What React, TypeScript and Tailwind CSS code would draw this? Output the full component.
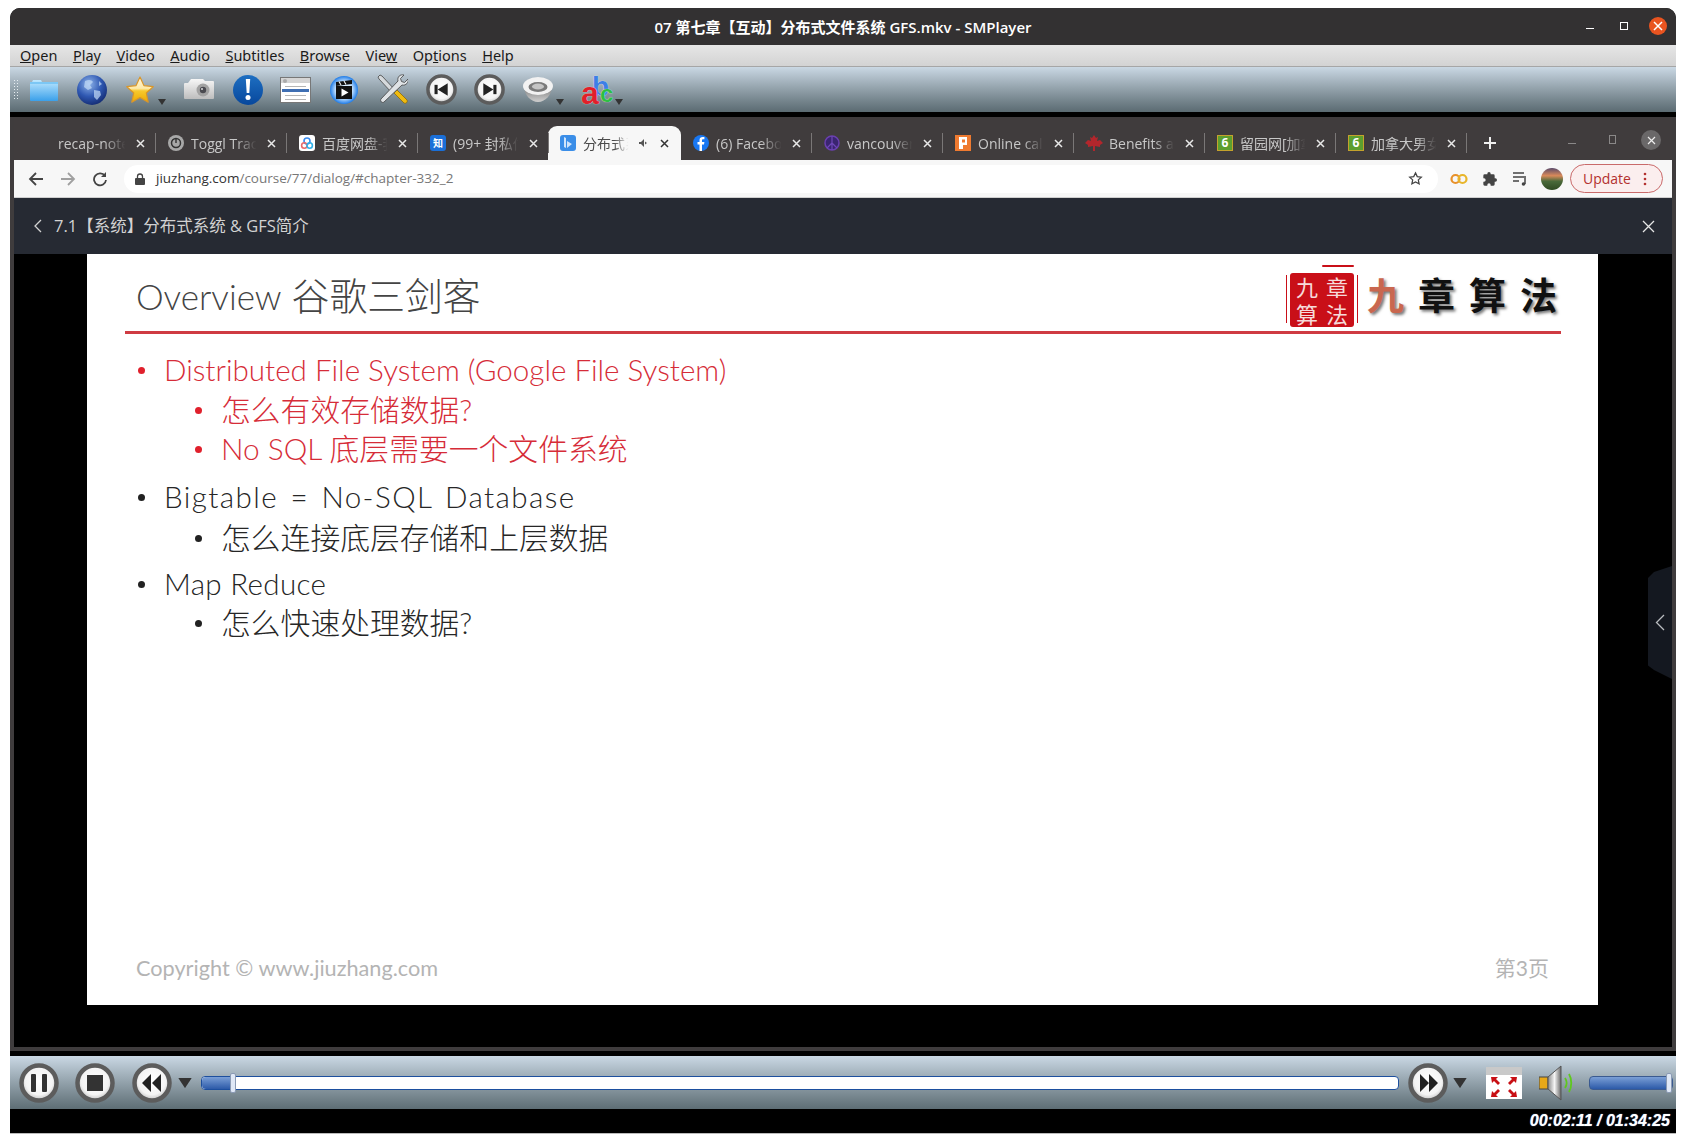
import React from "react";

const ui = { fontFamily: '"Open Sans","Noto Sans CJK SC",sans-serif' };
const menuFont = { fontFamily: '"Noto Sans","Noto Sans CJK SC",sans-serif' };
const slide = { fontFamily: 'Lato,"Noto Sans CJK SC",sans-serif' };

function Caret({ className = "" }: { className?: string }) {
  return (
    <svg width="8" height="6" viewBox="0 0 8 6" className={className}>
      <path d="M0 0h8L4 6z" fill="#333" />
    </svg>
  );
}

function Round({ size, children, className = "" }: { size: number; children: React.ReactNode; className?: string }) {
  return (
    <svg width={size} height={size} viewBox="0 0 40 40" className={className}>
      <defs>
        <radialGradient id="gl" cx="50%" cy="45%" r="55%">
          <stop offset="0%" stopColor="#fff" />
          <stop offset="70%" stopColor="#f4f4f4" />
          <stop offset="100%" stopColor="#bdbdbd" />
        </radialGradient>
      </defs>
      <circle cx="20" cy="20" r="17.5" fill="url(#gl)" stroke="#5c5c5c" strokeWidth="4.5" />
      {children}
    </svg>
  );
}

const Folder = () => (
  <svg width="30" height="24" viewBox="0 0 30 24">
    <defs>
      <linearGradient id="fo" x1="0" y1="0" x2="0" y2="1">
        <stop offset="0" stopColor="#bfe8ff" />
        <stop offset="1" stopColor="#3aa0ea" />
      </linearGradient>
    </defs>
    <path d="M1 4h2l1-2h8l1 2h16v18a1 1 0 0 1-1 1H2a1 1 0 0 1-1-1z" fill="url(#fo)" />
    <path d="M1 4h28v2H1z" fill="#7cc7f5" />
  </svg>
);
const Globe = () => (
  <svg width="30" height="30" viewBox="0 0 30 30">
    <defs>
      <radialGradient id="gb" cx="40%" cy="30%" r="75%">
        <stop offset="0" stopColor="#8fb4ea" />
        <stop offset="0.55" stopColor="#2f58b2" />
        <stop offset="1" stopColor="#12296f" />
      </radialGradient>
    </defs>
    <circle cx="15" cy="15" r="15" fill="url(#gb)" />
    <path d="M8 6c4-2 7-1 8 1l-3 3 2 3-4 2-4-3zM17 15l6 1 1 4-4 5-3-3zM22 6l3 3-3 2z" fill="#c3dbf6" opacity=".7" />
  </svg>
);
const Star = () => (
  <svg width="30" height="30" viewBox="0 0 30 30">
    <defs>
      <linearGradient id="st" x1="0" y1="0" x2="0" y2="1">
        <stop offset="0" stopColor="#fff7e0" />
        <stop offset="0.45" stopColor="#fde9a8" />
        <stop offset="0.55" stopColor="#f7c92e" />
        <stop offset="1" stopColor="#eda900" />
      </linearGradient>
    </defs>
    <path d="M15 2l3.900 8.600 9.300 1.100-6.900 6.300 1.900 9.200L15 22.600l-8.200 4.600 1.900-9.200-6.900-6.300 9.300-1.100z" fill="url(#st)" stroke="#d9962a" strokeWidth="1.200" strokeLinejoin="round" />
  </svg>
);
const Camera = () => (
  <svg width="30" height="21" viewBox="0 0 30 21">
    <defs>
      <linearGradient id="ca" x1="0" y1="0" x2="0" y2="1">
        <stop offset="0" stopColor="#f7f7f7" />
        <stop offset="1" stopColor="#bdbdbd" />
      </linearGradient>
    </defs>
    <path d="M1 4h3l3-4h12l2 2h8a1 1 0 0 1 1 1v16a1 1 0 0 1-1 1H1a1 1 0 0 1-1-1V5a1 1 0 0 1 1-1z" fill="url(#ca)" />
    <circle cx="19" cy="11" r="6.500" fill="#a2a2a2" />
    <circle cx="19" cy="11" r="3.200" fill="#4a4a50" />
    <circle cx="18" cy="10" r="1" fill="#ddd" />
  </svg>
);
const Info = () => (
  <svg width="30" height="30" viewBox="0 0 30 30">
    <defs>
      <linearGradient id="in" x1="0" y1="0" x2="0" y2="1">
        <stop offset="0" stopColor="#1e6fc2" />
        <stop offset="1" stopColor="#07479c" />
      </linearGradient>
    </defs>
    <circle cx="15" cy="15" r="15" fill="url(#in)" />
    <path d="M12.800 4h4.400l-.9 14h-2.600z" fill="#fff" />
    <circle cx="15" cy="22.500" r="2.500" fill="#fff" />
  </svg>
);
const Playlist = () => (
  <svg width="31" height="26" viewBox="0 0 31 26">
    <rect x=".5" y=".5" width="30" height="25" fill="#fff" stroke="#777" />
    <rect x="1" y="1" width="29" height="5" fill="#d5d5d5" />
    <circle cx="5" cy="4" r="2" fill="#aaa" />
    <rect x="5" y="9" width="21" height="1" fill="#b5b5b5" />
    <rect x="2" y="12" width="27" height="3" fill="#3f6fb3" />
    <rect x="5" y="18" width="21" height="1" fill="#b5b5b5" />
    <rect x="5" y="22" width="21" height="1" fill="#b5b5b5" />
  </svg>
);
const Film = () => (
  <svg width="28" height="28" viewBox="0 0 28 28">
    <defs>
      <radialGradient id="fi" cx="50%" cy="50%" r="50%">
        <stop offset="0.55" stopColor="#d7ecff" />
        <stop offset="1" stopColor="#1f7ce8" />
      </radialGradient>
    </defs>
    <circle cx="14" cy="14" r="14" fill="url(#fi)" />
    <rect x="6" y="10" width="16" height="13" fill="#111" />
    <path d="M6 6l16-2v4l-16 2z" fill="#111" />
    <path d="M9 5.500l2 3.500M14 5l2 3.500" stroke="#eee" strokeWidth="1.200" />
    <path d="M11.500 12.500l7 4-7 4z" fill="#fff" />
  </svg>
);
const Tools = () => (
  <svg width="31" height="31" viewBox="0 0 31 31">
    <path d="M1 3l2-2 2 1 13 14-3 3L2 5z" fill="#d5d9dc" stroke="#444" strokeWidth=".8" />
    <path d="M17 19l3-3 10 10c1 2-1 4-3 3z" fill="#f0bb10" stroke="#8f6c06" strokeWidth=".8" />
    <path d="M27 1l-3.500 3.500 1 3 3 1L31 5c1 3-2 7-6 6L7 28c-1.500 1.500-4.500-1-3-3L21 7c-1-4 2-7 6-6z" fill="#dfe3e6" stroke="#444" strokeWidth=".8" />
  </svg>
);
const Prev = () => (
  <Round size={31}>
    <rect x="11" y="14" width="4" height="12" fill="#222" />
    <path d="M28 12v16L15 20z" fill="#222" />
  </Round>
);
const Next = () => (
  <Round size={31}>
    <rect x="25" y="14" width="4" height="12" fill="#222" />
    <path d="M12 12v16l13-8z" fill="#222" />
  </Round>
);
const Speaker = () => (
  <svg width="30" height="26" viewBox="0 0 30 26">
    <defs>
      <linearGradient id="sb" x1="0" y1="0" x2="0" y2="1">
        <stop offset="0" stopColor="#777" />
        <stop offset="1" stopColor="#cfcfcf" />
      </linearGradient>
    </defs>
    <path d="M1 9c0 9 7 16 14 16s14-7 14-16z" fill="url(#sb)" />
    <ellipse cx="15" cy="9" rx="15" ry="9" fill="#f2f2f2" />
    <ellipse cx="15" cy="10" rx="9.500" ry="5" fill="#7a7a7a" />
    <ellipse cx="15" cy="9.500" rx="6" ry="3" fill="#c4c4c4" />
  </svg>
);
const Abc = () => (
  <div className="relative w-[32px] h-[34px] font-bold leading-none" style={{ fontFamily: '"Liberation Sans",sans-serif' }}>
    <span className="absolute left-[12px] top-[0px] text-[28px] text-[#3d7fe6] [text-shadow:0_0_1px_#fff]">b</span>
    <span className="absolute left-[1px] top-[4px] text-[32px] text-[#e0202a] [text-shadow:0_0_1px_#fff]">a</span>
    <span className="absolute left-[20px] top-[9px] text-[24px] text-[#2ebf44] [text-shadow:0_0_1px_#fff]">c</span>
  </div>
);

const Ico = {
  toggl: (
    <svg width="16" height="16" viewBox="0 0 16 16">
      <circle cx="8" cy="8" r="8" fill="#a8a8a8" />
      <circle cx="8" cy="8" r="4.500" fill="none" stroke="#333" strokeWidth="1.500" />
      <rect x="7.300" y="4" width="1.400" height="4" fill="#333" />
    </svg>
  ),
  baidu: (
    <svg width="16" height="16" viewBox="0 0 16 16">
      <rect width="16" height="16" rx="3" fill="#fff" />
      <circle cx="8" cy="6" r="3" fill="none" stroke="#3b8cf0" strokeWidth="1.600" />
      <circle cx="5.300" cy="10.500" r="2.700" fill="none" stroke="#e86a6a" strokeWidth="1.600" />
      <circle cx="10.700" cy="10.500" r="2.700" fill="none" stroke="#2fb0e8" strokeWidth="1.600" />
    </svg>
  ),
  zhihu: (
    <div className="w-[16px] h-[16px] rounded-[3px] bg-[#1a6fd8] text-white text-[10px] leading-[16px] text-center font-bold">知</div>
  ),
  active: (
    <svg width="16" height="16" viewBox="0 0 16 16">
      <rect width="16" height="16" rx="3" fill="#3b8ee8" />
      <path d="M4 2l2 1v10l-2-1zM7 6l5 3-5 4z" fill="#cfe4fb" />
    </svg>
  ),
  fb: (
    <svg width="16" height="16" viewBox="0 0 16 16">
      <circle cx="8" cy="8" r="8" fill="#1877f2" />
      <path d="M9 16V9.500h2l.4-2.500H9V5.500c0-.8.300-1.200 1.200-1.200h1.200V2.100C11 2 10.300 2 9.700 2 7.800 2 6.500 3.100 6.500 5.200V7H4.500v2.500h2V16z" fill="#fff" />
    </svg>
  ),
  peace: (
    <svg width="16" height="16" viewBox="0 0 16 16">
      <circle cx="8" cy="8" r="7" fill="#3a2570" stroke="#6a3fb0" strokeWidth="1.500" />
      <path d="M8 1v14M8 8l-5 5M8 8l5 5" stroke="#6f48b8" strokeWidth="1.200" />
    </svg>
  ),
  orange: (
    <svg width="16" height="16" viewBox="0 0 16 16">
      <rect width="16" height="16" fill="#ef7a30" />
      <path d="M4 2h8v8H8v4H4z" fill="#fff" />
      <rect x="7" y="4.500" width="3" height="3" fill="#ef7a30" />
    </svg>
  ),
  maple: (
    <svg width="18" height="16" viewBox="0 0 18 16">
      <path d="M9 0l2 3 2-1-1 4 3-1 3 3-3 2 0 2-5-1v5H8v-5l-5 1V10L0 8l3-3 3 1-1-4 2 1z" fill="#b3262c" />
    </svg>
  ),
  six: (
    <div className="w-[16px] h-[16px] bg-[#5c9e2e] border border-[#c4a22c] text-white text-[12px] leading-[14px] text-center font-bold">6</div>
  ),
};

const tabs = [
  { t: "recap-notes", w: "w-[131px] pl-[33px]", icon: null },
  { t: "Toggl Track", icon: Ico.toggl },
  { t: "百度网盘-我的", icon: Ico.baidu },
  { t: "(99+ 封私信", icon: Ico.zhihu },
  { t: "分布式系统", icon: Ico.active, active: true },
  { t: "(6) Facebook", icon: Ico.fb },
  { t: "vancouver", icon: Ico.peace },
  { t: "Online calc", icon: Ico.orange },
  { t: "Benefits and", icon: Ico.maple },
  { t: "留园网[加拿", icon: Ico.six },
  { t: "加拿大男女", icon: Ico.six },
];

function Tab({ t }: { t: (typeof tabs)[number] }) {
  return (
    <div
      className={
        t.active
          ? "flex items-center w-[133px] h-[34px] pl-[11px] pr-[12px] -ml-px bg-[#f7f7f7] rounded-t-[9px] text-[#4a4a4a]"
          : `flex items-center h-[34px] ${t.w ?? "w-[131px] pl-[11px]"} pr-[11px] text-[#c8c8c8] relative`
      }
    >
      {t.icon && <span className="shrink-0 mr-[6px] w-[18px] flex justify-center">{t.icon}</span>}
      <span className="flex-1 min-w-0 overflow-hidden whitespace-nowrap text-[14px] [mask-image:linear-gradient(90deg,#000_65%,transparent_95%)]">
        {t.t}
      </span>
      {t.active && (
        <svg width="10" height="10" viewBox="0 0 10 10" className="mr-[4px] ml-[8px] shrink-0">
          <path d="M0 4h2l3-3v8L2 6H0zM6 3.500l2 1.500-2 1.500z" fill="#555" />
        </svg>
      )}
      <svg width="9" height="9" viewBox="0 0 9 9" className="shrink-0 ml-[7px]">
        <path d="M1 1l7 7M8 1L1 8" stroke={t.active ? "#333" : "#e8e8e8"} strokeWidth="1.500" />
      </svg>
      {!t.active && <span className="absolute right-0 top-[7px] h-[20px] w-px bg-[#7a7777]" />}
    </div>
  );
}

const rows = [
  { t: "Distributed File System (Google File System)", l: 1, red: true, c: "mt-[16px]" },
  { t: "怎么有效存储数据?", l: 2, red: true, c: "mt-0" },
  { t: "No SQL 底层需要一个文件系统", l: 2, red: true, c: "-mt-px" },
  { t: "Bigtable = No-SQL Database", l: 1, c: "mt-[8px]", x: "tracking-[1.400px] [word-spacing:3px]" },
  { t: "怎么连接底层存储和上层数据", l: 2, c: "mt-[1px]" },
  { t: "Map Reduce", l: 1, c: "mt-[6px]", x: "tracking-[0.300px]" },
  { t: "怎么快速处理数据?", l: 2, c: "-mt-px" },
];

function Row({ r }: { r: (typeof rows)[number] }) {
  const color = r.red ? "text-[#d62c38]" : "text-[#262626]";
  const dot = r.red ? "bg-[#e0202c]" : "bg-[#222222]";
  return (
    <div className={`flex items-center h-[40px] ${r.c} ${color} ${r.l === 1 ? "pl-[51px]" : "pl-[108px]"}`}>
      <span className={`w-[7px] h-[7px] rounded-full shrink-0 ${dot}`} />
      <span className={`${r.l === 1 ? "ml-[19px] text-[29.600px]" : "ml-[19px] text-[29.800px]"} font-light whitespace-nowrap ${r.x ?? ""}`}>{r.t}</span>
    </div>
  );
}

const Logo = () => (
  <div className="flex items-center h-full mt-[5px]" style={{ fontFamily: '"Noto Sans CJK SC",sans-serif' }}>
    <div className="relative w-[64px] h-[54px] mr-[13px] mt-[9px] bg-[#c90f18] rounded-[3px] text-[#f6dada] text-[22px] leading-[25px] grid grid-cols-2 place-items-center px-[2px]">
      <span className="absolute right-0 top-[-8px] w-[32px] h-[2px] bg-[#c90f18] rounded-full" />
      <span className="absolute left-[-4px] top-[2px] w-[1px] h-[48px] bg-[#c90f18]" />
      <span className="absolute right-[-4px] top-[2px] w-[1px] h-[48px] bg-[#c90f18]" />
      <span>九</span>
      <span>章</span>
      <span>算</span>
      <span>法</span>
    </div>
    <div className="flex items-center gap-[14px] text-[37px] font-bold [text-shadow:2px_2px_3px_#777]">
      <span className="text-[#c9674f]">九</span>
      <span className="text-[#111]">章</span>
      <span className="text-[#111]">算</span>
      <span className="text-[#111]">法</span>
    </div>
  </div>
);

export default function App() {
  return (
    <div className="w-[1686px] h-[1143px] bg-white pt-[8px] pl-[10px] overflow-hidden" style={ui}>
      <div className="w-[1666px] h-[1126px] flex flex-col bg-black rounded-t-[10px] border-b border-[#bbbbbb] overflow-hidden">
        {/* title bar */}
        <div className="h-[37px] shrink-0 bg-[#333132] flex items-center relative">
          <span className="w-full text-center text-white text-[15px] font-semibold pt-[1px]">07 第七章【互动】分布式文件系统 GFS.mkv - SMPlayer</span>
          <span className="absolute left-[1576px] top-[20px] w-[8px] h-px bg-white" />
          <span className="absolute left-[1610px] top-[14px] w-[8px] h-[8px] border border-white" />
          <span className="absolute left-[1639px] top-[9px] w-[18px] h-[18px] rounded-full bg-[#e95420] flex items-center justify-center">
            <svg width="10" height="10" viewBox="0 0 10 10">
              <path d="M1 1l8 8M9 1L1 9" stroke="#fff" strokeWidth="1.500" />
            </svg>
          </span>
        </div>
        {/* menu */}
        <div className="h-[22px] shrink-0 flex items-center gap-[15.500px] pl-[10px] pt-[1px] bg-gradient-to-b from-[#e6e6e6] to-[#d3d3d3] border-b border-[#a6a6a6] text-[14.500px] text-[#1a1a1a]" style={menuFont}>
          <span><u>O</u>pen</span>
          <span><u>P</u>lay</span>
          <span><u>V</u>ideo</span>
          <span><u>A</u>udio</span>
          <span><u>S</u>ubtitles</span>
          <span><u>B</u>rowse</span>
          <span>Vie<u>w</u></span>
          <span>Op<u>t</u>ions</span>
          <span><u>H</u>elp</span>
        </div>
        {/* toolbar */}
        <div className="h-[45px] shrink-0 flex items-center bg-gradient-to-b from-[#cad8e4] to-[#5b6b72] relative">
          <span className="absolute left-[3px] top-[12px] w-[5px] h-[20px] bg-[radial-gradient(#e8eef2_1px,transparent_1px)] bg-[length:3px_3px]" />
          <span className="ml-[19px] w-[30px] flex justify-center"><Folder /></span>
          <span className="ml-[18px] w-[30px] flex justify-center"><Globe /></span>
          <span className="ml-[18px] w-[30px] flex justify-center relative"><Star /><Caret className="absolute left-[33px] bottom-[0px]" /></span>
          <span className="ml-[29px] w-[30px] flex justify-center"><Camera /></span>
          <span className="ml-[19px] w-[30px] flex justify-center"><Info /></span>
          <span className="ml-[17px] w-[31px] flex justify-center"><Playlist /></span>
          <span className="ml-[19px] w-[28px] flex justify-center"><Film /></span>
          <span className="ml-[19px] w-[31px] flex justify-center"><Tools /></span>
          <span className="ml-[18px] w-[31px] flex justify-center"><Prev /></span>
          <span className="ml-[17px] w-[31px] flex justify-center"><Next /></span>
          <span className="ml-[18px] w-[30px] flex justify-center relative"><Speaker /><Caret className="absolute left-[33px] bottom-[-2px]" /></span>
          <span className="ml-[27px] w-[32px] flex justify-center relative"><Abc /><Caret className="absolute left-[35px] bottom-[2px]" /></span>
        </div>
        <div className="h-[5px] shrink-0 bg-black" />
        {/* browser */}
        <div className="h-[934px] shrink-0 border-x-[4px] border-t-[1px] border-b-[4px] border-[#3f3c3d] flex flex-col bg-black relative">
          <div className="h-[42px] shrink-0 bg-[#403c3d] flex items-end pl-[11px] pb-0 relative">
            {tabs.map((t) => (
              <Tab key={t.t} t={t} />
            ))}
            <svg width="12" height="12" viewBox="0 0 12 12" className="ml-[17px] mb-[11px]">
              <path d="M6 0v12M0 6h12" stroke="#f0f0f0" strokeWidth="2" />
            </svg>
            <span className="absolute left-[1554px] top-[25px] w-[8px] h-px bg-[#8a8888]" />
            <span className="absolute left-[1595px] top-[17px] w-[7px] h-[9px] border border-[#8a8888]" />
            <span className="absolute right-[11px] top-[12px] w-[20px] h-[20px] rounded-full bg-[#6a6869] flex items-center justify-center">
              <svg width="9" height="9" viewBox="0 0 9 9">
                <path d="M1 1l7 7M8 1L1 8" stroke="#eee" strokeWidth="1.200" />
              </svg>
            </span>
          </div>
          <div className="h-[38px] shrink-0 bg-[#f7f7f7] border-b border-[#cfcfcf] flex items-center relative">
            <svg width="16" height="16" viewBox="0 0 16 16" className="ml-[14px]">
              <path d="M15 8H2M8 2L2 8l6 6" fill="none" stroke="#444" strokeWidth="1.800" />
            </svg>
            <svg width="16" height="16" viewBox="0 0 16 16" className="ml-[16px]">
              <path d="M1 8h13M8 2l6 6-6 6" fill="none" stroke="#a0a0a0" strokeWidth="1.800" />
            </svg>
            <svg width="16" height="16" viewBox="0 0 16 16" className="ml-[16px]">
              <path d="M13 5a6 6 0 1 0 1 4" fill="none" stroke="#444" strokeWidth="1.800" />
              <path d="M14 1v5H9z" fill="#444" />
            </svg>
            <div className="ml-[16px] w-[1314px] h-[28px] bg-white rounded-full flex items-center pl-[11px] pr-[15px] text-[13.500px]">
              <svg width="10" height="12" viewBox="0 0 10 12" className="mr-[11px]">
                <rect y="5" width="10" height="7" rx="1" fill="#444" />
                <path d="M2.500 5V3.500a2.500 2.500 0 0 1 5 0V5" fill="none" stroke="#444" strokeWidth="1.300" />
              </svg>
              <span className="text-[#333]">jiuzhang.com</span>
              <span className="text-[#777]">/course/77/dialog/#chapter-332_2</span>
              <svg width="15" height="15" viewBox="0 0 24 24" className="ml-auto">
                <path d="M12 3l2.800 6 6.500.8-4.800 4.400 1.300 6.400L12 17.400l-5.800 3.200 1.300-6.400L2.700 9.800 9.200 9z" fill="none" stroke="#444" strokeWidth="2" />
              </svg>
            </div>
            <svg width="18" height="12" viewBox="0 0 18 12" className="ml-[12px]">
              <circle cx="5.500" cy="6" r="4" fill="none" stroke="#e8912a" strokeWidth="2.200" />
              <circle cx="12.500" cy="6" r="4" fill="none" stroke="#e8b52a" strokeWidth="2.200" />
            </svg>
            <svg width="16" height="16" viewBox="0 0 24 24" className="ml-[14px]">
              <path d="M20 11h-1V7a2 2 0 0 0-2-2h-4V4a2.500 2.500 0 0 0-5 0v1H4a2 2 0 0 0-2 2v4h1a2.500 2.500 0 0 1 0 5H2v4a2 2 0 0 0 2 2h4v-1a2.500 2.500 0 0 1 5 0v1h4a2 2 0 0 0 2-2v-4h1a2.500 2.500 0 0 0 0-5z" fill="#444" />
            </svg>
            <svg width="16" height="14" viewBox="0 0 16 14" className="ml-[15px]">
              <path d="M0 1h11M0 5h11M0 9h6" stroke="#444" strokeWidth="1.500" />
              <path d="M12 4v8" stroke="#444" strokeWidth="1.500" />
              <circle cx="10.500" cy="12" r="1.800" fill="#444" />
            </svg>
            <svg width="22" height="22" viewBox="0 0 22 22" className="ml-[12px]">
              <defs>
                <linearGradient id="av" x1="0" y1="0" x2="0" y2="1">
                  <stop offset="0" stopColor="#5a4a6a" />
                  <stop offset=".35" stopColor="#d98a5a" />
                  <stop offset=".6" stopColor="#4a6a3a" />
                  <stop offset="1" stopColor="#2f4a22" />
                </linearGradient>
              </defs>
              <circle cx="11" cy="11" r="11" fill="url(#av)" />
            </svg>
            <div className="ml-[7px] w-[93px] h-[29px] rounded-full border border-[#c96a6a] bg-[#fbeeee] text-[#b3312f] text-[14px] flex items-center pl-[12px]">
              Update
              <svg width="4" height="14" viewBox="0 0 4 14" className="ml-[12px]">
                <circle cx="2" cy="2" r="1.300" fill="#b3312f" />
                <circle cx="2" cy="7" r="1.300" fill="#b3312f" />
                <circle cx="2" cy="12" r="1.300" fill="#b3312f" />
              </svg>
            </div>
          </div>
          <div className="h-[56px] shrink-0 bg-[#262a33] flex items-center text-[#d2d2d2] text-[16.500px] pl-[19px] pr-[17px]">
            <svg width="10" height="14" viewBox="0 0 10 14" className="mr-[11px]">
              <path d="M8 1L2 7l6 6" fill="none" stroke="#d2d2d2" strokeWidth="1.300" />
            </svg>
            <span>7.1【系统】分布式系统 & GFS简介</span>
            <svg width="13" height="13" viewBox="0 0 13 13" className="ml-auto">
              <path d="M1 1l11 11M12 1L1 12" stroke="#e6e6e6" strokeWidth="1.300" />
            </svg>
          </div>
          <div className="flex-1 min-h-0 relative">
            <div className="ml-[73px] w-[1511px] h-[751px] bg-white flex flex-col" style={slide}>
              <div className="h-[77px] shrink-0 flex items-center justify-between pl-[49px] pr-[41px]">
                <span className="font-light text-[#444444] pt-[8px] flex items-baseline">
                  <span className="text-[35px]">Overview</span>
                  <span className="text-[37.800px] ml-[10px]">谷歌三剑客</span>
                </span>
                <Logo />
              </div>
              <div className="ml-[38px] w-[1436px] h-[3px] shrink-0 bg-[#cf3b42]" />
              {rows.map((r) => (
                <Row key={r.t} r={r} />
              ))}
              <div className="mt-auto h-[53px] flex items-start justify-between pl-[49px] pr-[49px] text-[#b4b4b4]">
                <span className="text-[21.700px]">Copyright © www.jiuzhang.com</span>
                <span className="text-[21px]">第3页</span>
              </div>
            </div>
            <div className="absolute right-0 top-[312px] w-[24px] h-[113px] bg-[#141820] [clip-path:polygon(0_12px,6px_6px,100%_0,100%_100%,6px_92%,0_88%)] flex items-center justify-center">
              <svg width="10" height="17" viewBox="0 0 10 17">
                <path d="M9 1L1.500 8.500 9 16" fill="none" stroke="#b9bcc0" strokeWidth="1.300" />
              </svg>
            </div>
          </div>
        </div>
        <div className="h-[5px] shrink-0 bg-black" />
        {/* controls */}
        <div className="h-[53px] shrink-0 bg-gradient-to-b from-[#cad8e4] to-[#5e6e75] flex items-center relative">
          <Round size={40} className="ml-[9px]">
            <rect x="12" y="11" width="5" height="18" rx="1" fill="#333" />
            <rect x="23" y="11" width="5" height="18" rx="1" fill="#333" />
          </Round>
          <Round size={40} className="ml-[16px]">
            <rect x="12" y="12" width="16" height="16" fill="#333" />
          </Round>
          <Round size={40} className="ml-[17px]">
            <path d="M19 11v18l-9-9zM29 11v18l-9-9z" fill="#222" />
          </Round>
          <Caret className="ml-[9px] scale-[1.700]" />
          <div className="ml-[12px] w-[1198px] h-[14px] flex bg-white rounded-[4px] border border-[#1d4f9e] relative">
            <div className="w-[29px] rounded-l-[4px] bg-gradient-to-b from-[#7b9fd6] to-[#2c5aa8]" />
            <span className="absolute left-[28px] top-[-4px] w-[6px] h-[20px] rounded-[2px] bg-[#dfe8f6] border border-[#8a9ab4]" />
          </div>
          <Round size={40} className="ml-[9px]">
            <path d="M12 11v18l9-9zM21 11v18l9-9z" fill="#222" />
          </Round>
          <Caret className="ml-[8px] scale-[1.700]" />
          <div className="ml-[22px] w-[36px] h-[32px] bg-white relative">
            <div className="h-[8px] bg-[#c9c9c9]" />
            <svg width="36" height="24" viewBox="0 0 36 24">
              <path d="M5 2h7l-2 2 4 4-2 2-4-4-2 2zM31 2h-7l2 2-4 4 2 2 4-4 2 2zM5 22h7l-2-2 4-4-2-2-4 4-2-2zM31 22h-7l2-2-4-4 2-2 4 4 2-2z" fill="#c80f14" />
            </svg>
          </div>
          <svg width="37" height="36" viewBox="0 0 37 36" className="ml-[17px]">
            <defs>
              <linearGradient id="vo" x1="0" y1="0" x2="1" y2="0">
                <stop offset="0" stopColor="#8a8a8a" />
                <stop offset=".5" stopColor="#f4f4f4" />
                <stop offset="1" stopColor="#6a6a6a" />
              </linearGradient>
            </defs>
            <rect x="0" y="12" width="9" height="12" fill="#e8a818" stroke="#444" />
            <path d="M9 12L22 1v34L9 24z" fill="url(#vo)" stroke="#555" />
            <path d="M26 13c2 3 2 7 0 10" fill="none" stroke="#5fc81e" strokeWidth="1.800" />
            <path d="M30 9c3 5 3 13 0 18" fill="none" stroke="#5fc81e" strokeWidth="1.800" />
          </svg>
          <div className="ml-[13px] w-[84px] h-[14px] rounded-[4px] border border-[#3a5a90] bg-gradient-to-b from-[#7b9fd6] to-[#2c5aa8] relative">
            <span className="absolute right-0 top-[-4px] w-[6px] h-[20px] rounded-[2px] bg-[#dfe8f6] border border-[#8a9ab4]" />
          </div>
        </div>
        <div className="flex-1 bg-black flex items-center justify-end pr-[6px] text-white italic font-bold text-[16px] [text-shadow:0_0_1px_#9cc8ff]" style={{ fontFamily: '"Liberation Sans",sans-serif' }}>
          00:02:11 / 01:34:25
        </div>
      </div>
    </div>
  );
}
